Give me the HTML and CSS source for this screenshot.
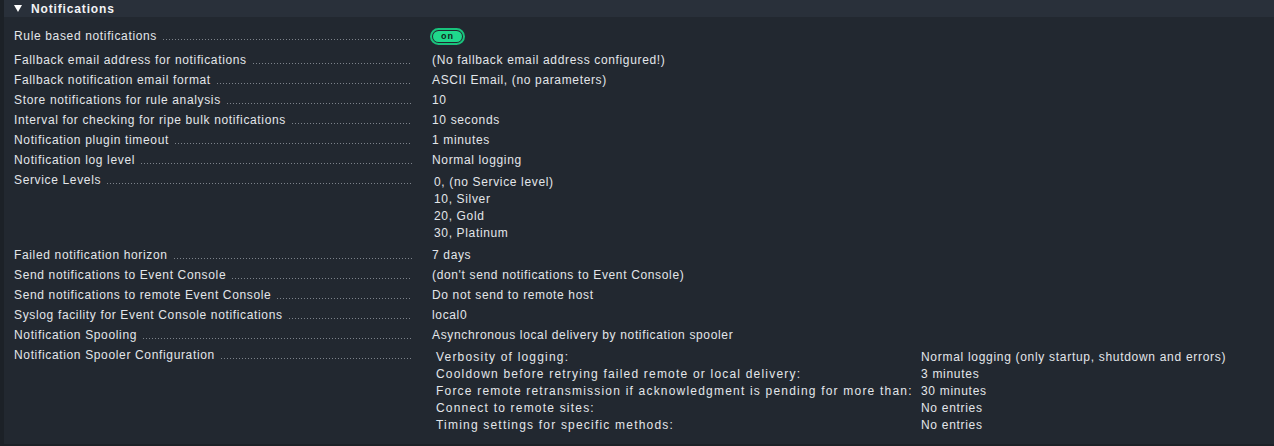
FILE: index.html
```html
<!DOCTYPE html>
<html>
<head>
<meta charset="utf-8">
<link rel="stylesheet" href="styles.css">
</head>
<body>
<div class="section">
  <div class="section-head">
    <svg class="tri" width="8" height="7" viewBox="0 0 8 7"><polygon points="0,0 8,0 4,7" fill="#ffffff"/></svg>
    <span class="title">Notifications</span>
  </div>
  <table class="settings">
    <tr class="first">
      <td class="legend"><div class="lbl"><span>Rule based notifications</span><i class="dots"></i></div></td>
      <td class="content"><span class="toggle"><span class="pill">on</span></span></td>
    </tr>
    <tr><td class="legend"><div class="lbl"><span>Fallback email address for notifications</span><i class="dots"></i></div></td><td class="content">(No fallback email address configured!)</td></tr>
    <tr><td class="legend"><div class="lbl"><span>Fallback notification email format</span><i class="dots"></i></div></td><td class="content">ASCII Email, (no parameters)</td></tr>
    <tr><td class="legend"><div class="lbl"><span>Store notifications for rule analysis</span><i class="dots"></i></div></td><td class="content">10</td></tr>
    <tr><td class="legend"><div class="lbl"><span>Interval for checking for ripe bulk notifications</span><i class="dots"></i></div></td><td class="content">10 seconds</td></tr>
    <tr><td class="legend"><div class="lbl"><span>Notification plugin timeout</span><i class="dots"></i></div></td><td class="content">1 minutes</td></tr>
    <tr><td class="legend"><div class="lbl"><span>Notification log level</span><i class="dots"></i></div></td><td class="content">Normal logging</td></tr>
    <tr>
      <td class="legend"><div class="lbl"><span>Service Levels</span><i class="dots"></i></div></td>
      <td class="content">
        <div class="levels">
          <div>0, (no Service level)</div>
          <div>10, Silver</div>
          <div>20, Gold</div>
          <div>30, Platinum</div>
        </div>
      </td>
    </tr>
    <tr><td class="legend"><div class="lbl"><span>Failed notification horizon</span><i class="dots"></i></div></td><td class="content">7 days</td></tr>
    <tr><td class="legend"><div class="lbl"><span>Send notifications to Event Console</span><i class="dots"></i></div></td><td class="content">(don't send notifications to Event Console)</td></tr>
    <tr><td class="legend"><div class="lbl"><span>Send notifications to remote Event Console</span><i class="dots"></i></div></td><td class="content">Do not send to remote host</td></tr>
    <tr><td class="legend"><div class="lbl"><span>Syslog facility for Event Console notifications</span><i class="dots"></i></div></td><td class="content">local0</td></tr>
    <tr><td class="legend"><div class="lbl"><span>Notification Spooling</span><i class="dots"></i></div></td><td class="content">Asynchronous local delivery by notification spooler</td></tr>
    <tr>
      <td class="legend"><div class="lbl"><span>Notification Spooler Configuration</span><i class="dots"></i></div></td>
      <td class="content">
        <table class="sub">
          <tr><td class="k">Verbosity of logging:</td><td class="v">Normal logging (only startup, shutdown and errors)</td></tr>
          <tr><td class="k">Cooldown before retrying failed remote or local delivery:</td><td class="v">3 minutes</td></tr>
          <tr><td class="k">Force remote retransmission if acknowledgment is pending for more than:</td><td class="v">30 minutes</td></tr>
          <tr><td class="k">Connect to remote sites:</td><td class="v">No entries</td></tr>
          <tr><td class="k">Timing settings for specific methods:</td><td class="v">No entries</td></tr>
        </table>
      </td>
    </tr>
  </table>
</div>
</body>
</html>
```

FILE: styles.css
```css
html, body {
  margin: 0;
  padding: 0;
  background: #1c2127;
  height: 100%;
}

body {
  font-family: "Liberation Sans", Arial, sans-serif;
  font-size: 12px;
  letter-spacing: 0.65px;
  color: #e3e6ea;
}

.section {
  margin-left: 4px;
  background: #222830;
  padding-bottom: 7px;
}

.section-head {
  height: 17px;
  background: #29303a;
  display: flex;
  align-items: center;
  padding-left: 10px;
}

.tri {
  display: block;
  margin-right: 9px;
}

.title {
  font-weight: bold;
  font-size: 12px;
  letter-spacing: 0.85px;
  color: #f2f3f5;
}

.settings {
  border-collapse: collapse;
  margin-top: 9px;
}

.settings > tbody > tr > td {
  padding: 3px 0;
  vertical-align: top;
  line-height: 14px;
}

.settings > tbody > tr.first > td.legend {
  padding-bottom: 7px;
}

.settings > tbody > tr.first > td.content {
  padding-top: 2px;
  padding-bottom: 0;
}

.legend {
  width: 398px;
  padding-left: 10px !important;
  padding-right: 20px !important;
}

.lbl {
  display: flex;
  align-items: flex-end;
}

.lbl span {
  white-space: nowrap;
}

.dots {
  flex: 1;
  height: 1px;
  margin: 0 0 3px 6px;
  background-image: repeating-linear-gradient(to right, #7d838b 0 1px, transparent 1px 3px);
}

.toggle {
  display: block;
  box-sizing: border-box;
  width: 35px;
  height: 17px;
  border: 2px solid #19c27c;
  border-radius: 9px;
  padding: 1px;
  margin-left: -2px;
}

.pill {
  display: block;
  height: 11px;
  border-radius: 6px;
  background: #1fd88b;
  color: #10261b;
  font-size: 9px;
  font-weight: bold;
  letter-spacing: 1px;
  line-height: 11px;
  text-align: center;
}

.levels {
  padding-left: 2px;
  padding-top: 1px;
}

.levels div {
  line-height: 17px;
}

.sub {
  border-collapse: collapse;
  margin-left: 4px;
  margin-top: 1px;
}

.sub td {
  padding: 0;
  line-height: 17px;
  white-space: nowrap;
  vertical-align: top;
}

.sub .k {
  width: 485px;
  letter-spacing: 1.2px;
}

.sub .v {
  letter-spacing: 0.7px;
}
```
